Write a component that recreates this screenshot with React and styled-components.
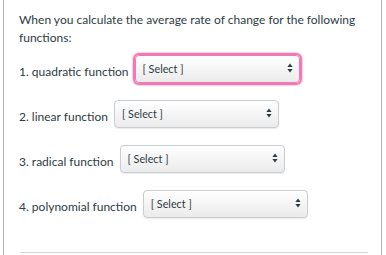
import React from "react";
import styled, { createGlobalStyle } from "styled-components";

const GlobalStyle = createGlobalStyle`
  html, body {
    margin: 0;
    padding: 0;
    background: #ffffff;
  }
  body {
    font-family: Lato, "Liberation Sans", sans-serif;
    color: #2d3b45;
  }
`;

const Frame = styled.div`
  width: 379px;
  height: 255px;
  margin-left: 3px;
  border-left: 1px solid #b4b4b4;
  border-right: 1px solid #b4b4b4;
  box-sizing: border-box;
  padding: 11px 14px 0 15px;
  display: flex;
  flex-direction: column;
`;

const Prompt = styled.p`
  margin: 0;
  font-size: 12px;
  line-height: 18px;
`;

const List = styled.div`
  display: flex;
  flex-direction: column;
  gap: 17px;
  margin-top: 8px;
`;

const Row = styled.div`
  display: flex;
  align-items: center;
  gap: 6px;
  height: 28px;
`;

const Label = styled.span`
  font-size: 12px;
  padding-top: 4px;
`;

const SelectBox = styled.div`
  width: 165px;
  height: 28px;
  box-sizing: border-box;
  display: flex;
  align-items: center;
  justify-content: space-between;
  padding: 0 6px 2px 7px;
  border: 1px solid #c7cdd1;
  border-radius: 4px;
  background: linear-gradient(#ffffff, #ebebeb);
  font-size: 10.8px;
  color: #2d3b45;
  box-shadow: ${(p) =>
    p.$focused ? "0 0 0 2px #f07ab4, 0 0 1px 3px rgba(240,122,180,0.35)" : "0 1px 1px rgba(0,0,0,0.08)"};
  border-color: ${(p) => (p.$focused ? "#f07ab4" : "#c7cdd1")};
`;

const Arrows = () => (
  <svg width="6" height="10" viewBox="0 0 6 10">
    <path d="M3 0.5 L5.6 4 H0.4 Z M3 9.5 L5.6 6 H0.4 Z" fill="#2d3b45" />
  </svg>
);

const Divider = styled.div`
  margin: auto 0 2px 1px;
  width: 348px;
  height: 1px;
  flex-shrink: 0;
  background: #d8d8d8;
`;

const items = [
  { label: "1. quadratic function", focused: true },
  { label: "2. linear function" },
  { label: "3. radical function" },
  { label: "4. polynomial function" },
];

const App = () => (
  <>
    <GlobalStyle />
    <Frame>
      <Prompt>When you calculate the average rate of change for the following functions:</Prompt>
      <List>
        {items.map((it) => (
          <Row key={it.label}>
            <Label>{it.label}</Label>
            <SelectBox $focused={it.focused}>
              <span>[ Select ]</span>
              <Arrows />
            </SelectBox>
          </Row>
        ))}
      </List>
      <Divider />
    </Frame>
  </>
);

export default App;
